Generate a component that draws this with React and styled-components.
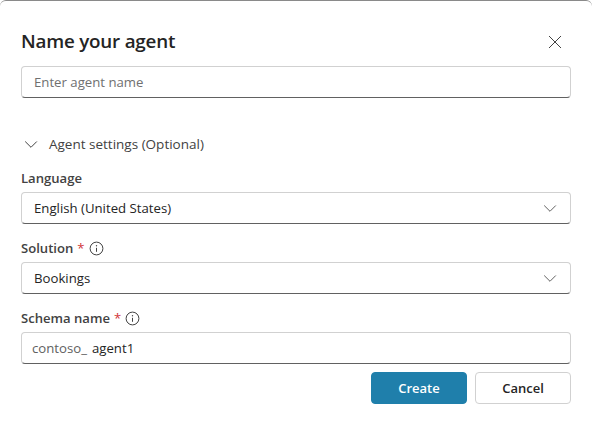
import React from "react";
import styled, { createGlobalStyle } from "styled-components";

const GlobalStyle = createGlobalStyle`
  html, body {
    margin: 0;
    padding: 0;
    background: #fff;
  }
  body {
    font-family: "Open Sans", "Noto Sans", "Liberation Sans", sans-serif;
    color: #242424;
  }
`;

const Dialog = styled.div`
  width: 592px;
  height: 425px;
  box-sizing: border-box;
  padding: 0 21px;
  background: #fff;
  border-top: 1px solid #8a8a8a;
  border-radius: 6px 6px 0 0;
  overflow: hidden;
`;

const Header = styled.div`
  display: flex;
  align-items: center;
  justify-content: space-between;
  height: 30px;
  margin-top: 25px;
  margin-bottom: 10px;
`;

const Title = styled.h1`
  margin: 0;
  font-size: 18.8px;
  font-weight: 600;
  letter-spacing: -0.2px;
  color: #242424;
`;

const CloseButton = styled.button`
  display: flex;
  padding: 2px 0 0;
  margin-right: 9px;
  border: 0;
  background: none;
  color: #424242;
`;

const Field = styled.div`
  display: flex;
  align-items: center;
  justify-content: space-between;
  height: 32px;
  box-sizing: border-box;
  padding: 0 13px 0 ${(p) => p.$pad || 12}px;
  border: 1px solid #d1d1d1;
  border-bottom-color: #616161;
  border-radius: 4px;
  font-size: 13.2px;
  color: ${(p) => (p.$placeholder ? "#707070" : "#242424")};
`;

const Disclosure = styled.div`
  display: flex;
  align-items: center;
  gap: 11px;
  height: 20px;
  margin: 36px 0 14px 3px;
  font-size: 13.5px;
  color: #424242;
`;

const Label = styled.div`
  display: flex;
  align-items: center;
  height: 20px;
  margin: ${(p) => (p.$first ? "0" : "14px")} 0 4px;
  font-size: 13.1px;
  font-weight: 600;
  color: #424242;
`;

const Required = styled.span`
  margin-left: 4px;
  font-weight: 400;
  color: #d13438;
`;

const InfoIcon = styled.svg`
  margin-left: 4px;
  color: #424242;
`;

const Prefix = styled.span`
  margin-right: 5px;
  color: #616161;
`;

const Actions = styled.div`
  display: flex;
  justify-content: flex-end;
  gap: 8px;
  margin-top: 8px;
`;

const Button = styled.button`
  width: 96px;
  height: 32px;
  box-sizing: border-box;
  padding: 0;
  border: 1px solid ${(p) => (p.$primary ? "#1f7fab" : "#d1d1d1")};
  border-radius: 4px;
  background: ${(p) => (p.$primary ? "#1f7fab" : "#fff")};
  color: ${(p) => (p.$primary ? "#fff" : "#242424")};
  font-family: inherit;
  font-size: 13px;
  font-weight: 600;
`;

const Chevron = ({ color = "#616161", size = 14 }) => (
  <svg width={size} height={size} viewBox="0 0 14 14" fill="none" stroke={color} strokeWidth="1">
    <path d="M1.2 4.5 7 10.3l5.8-5.8" />
  </svg>
);

const Info = () => (
  <InfoIcon width="15" height="15" viewBox="0 0 15 15" fill="none" stroke="currentColor">
    <circle cx="7.5" cy="7.5" r="6.4" />
    <path d="M7.5 6.8v4" />
    <circle cx="7.5" cy="4.7" r="0.7" fill="currentColor" stroke="none" />
  </InfoIcon>
);

export default function App() {
  return (
    <>
      <GlobalStyle />
      <Dialog>
        <Header>
          <Title>Name your agent</Title>
          <CloseButton aria-label="Close">
            <svg width="14" height="14" viewBox="0 0 14 14" fill="none" stroke="currentColor" strokeWidth="1">
              <path d="M1 1l12 12M13 1 1 13" />
            </svg>
          </CloseButton>
        </Header>
        <Field $placeholder>Enter agent name</Field>
        <Disclosure>
          <Chevron color="#424242" />
          Agent settings (Optional)
        </Disclosure>
        <Label $first>Language</Label>
        <Field>
          English (United States)
          <Chevron />
        </Field>
        <Label>
          Solution<Required>*</Required>
          <Info />
        </Label>
        <Field>
          Bookings
          <Chevron />
        </Field>
        <Label>
          Schema name<Required>*</Required>
          <Info />
        </Label>
        <Field $pad={10}>
          <span>
            <Prefix>contoso_</Prefix>agent1
          </span>
        </Field>
        <Actions>
          <Button $primary>Create</Button>
          <Button>Cancel</Button>
        </Actions>
      </Dialog>
    </>
  );
}
